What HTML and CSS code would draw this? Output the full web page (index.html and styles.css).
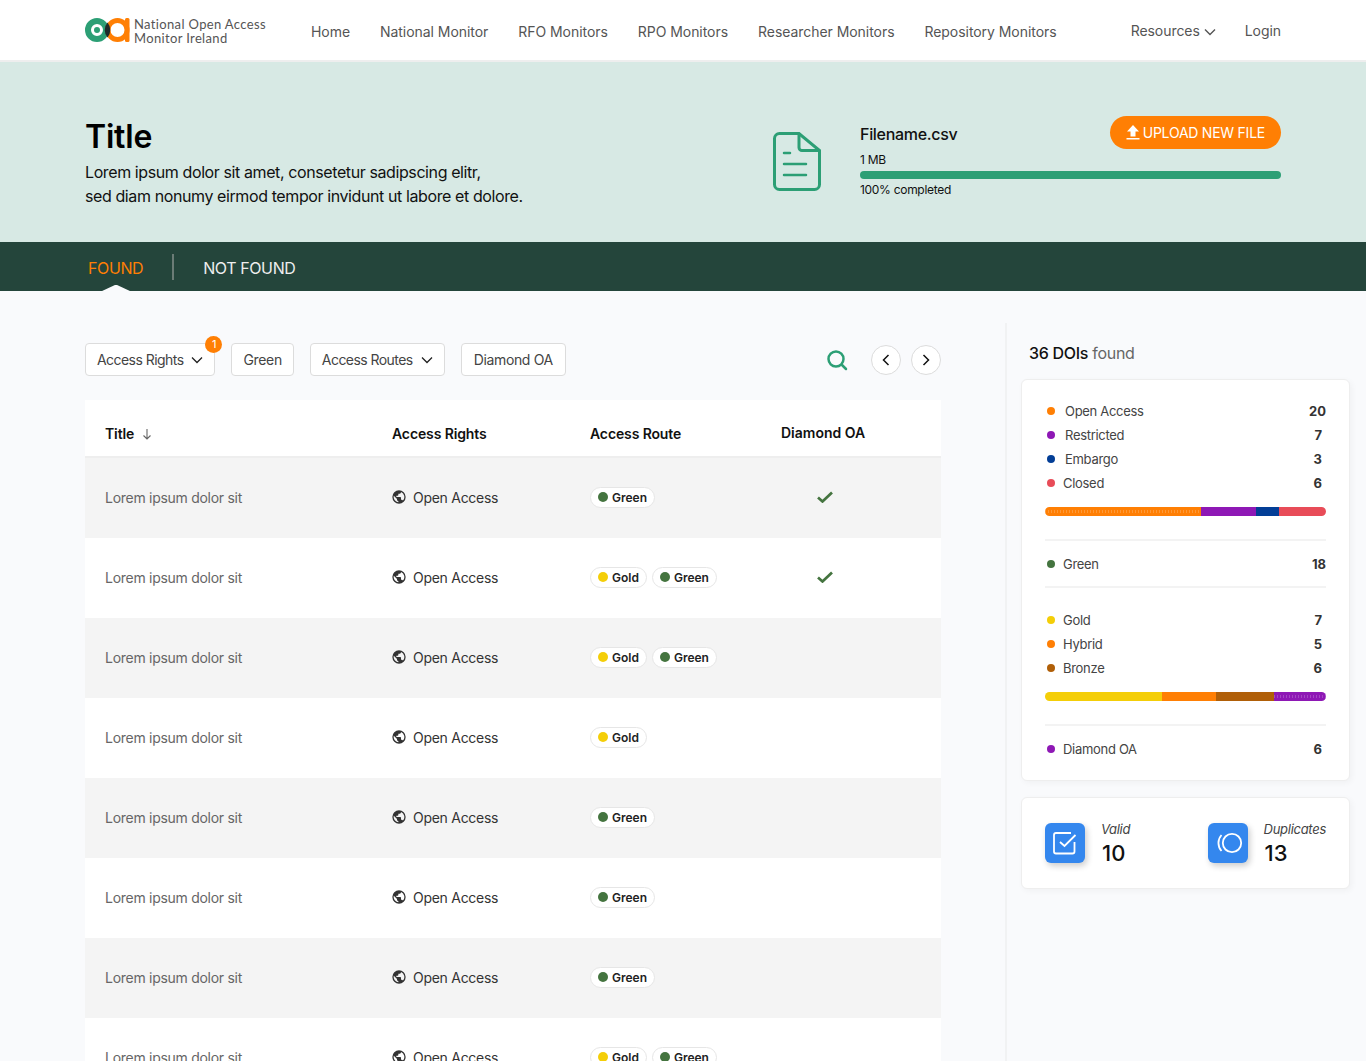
FILE: index.html
```html
<!DOCTYPE html>
<html lang="en">
<head>
  <meta charset="UTF-8" />
  <meta name="viewport" content="width=device-width, initial-scale=1.0" />
  <title>National Open Access Monitor Ireland</title>
  <link rel="stylesheet" href="styles.css">
</head>
<body>
  <header class="navbar">
    <a class="logo" href="#">
      <svg width="45" height="26" viewBox="0 0 45 26">
        <circle cx="12" cy="13" r="9" fill="none" stroke="#2c9f75" stroke-width="6"/>
        <circle cx="32.500" cy="13" r="9.500" fill="none" stroke="#ff7f04" stroke-width="5"/>
        <rect x="40" y="1" width="4.500" height="24" rx="1.500" fill="#ff7f04"/>
        <path d="M22.500 5.500a11.500 11.500 0 0 1 0 15a11.500 11.500 0 0 1 0-15z" fill="#1d2b2a"/>
        <circle cx="12" cy="13" r="3" fill="#2c9f75"/>
      </svg>
      <span class="logo-text">National Open Access<br>Monitor Ireland</span>
    </a>
    <nav class="nav-main">
      <a href="#">Home</a>
      <a href="#">National Monitor</a>
      <a href="#">RFO Monitors</a>
      <a href="#">RPO Monitors</a>
      <a href="#">Researcher Monitors</a>
      <a href="#">Repository Monitors</a>
    </nav>
    <nav class="nav-side">
      <a href="#" class="nav-drop">Resources
        <svg width="12" height="8" viewBox="0 0 12 8"><path d="M1 1.500l5 5 5-5" fill="none" stroke="#555" stroke-width="1.400"/></svg>
      </a>
      <a href="#">Login</a>
    </nav>
  </header>

  <section class="hero">
    <div class="hero-text">
      <h1>Title</h1>
      <p>Lorem ipsum dolor sit amet, consetetur sadipscing elitr,<br>sed diam nonumy eirmod tempor invidunt ut labore et dolore.</p>
    </div>
    <svg class="file-icon" width="48" height="59" viewBox="0 0 48 59">
      <path d="M7 1.500h19l20.500 17v34a5 5 0 0 1-5 5h-35a5 5 0 0 1-5-5v-46a5 5 0 0 1 5-5z" fill="none" stroke="#2c9f75" stroke-width="3"/>
      <path d="M26 1.500v14a3 3 0 0 0 3 3h17.500" fill="none" stroke="#2c9f75" stroke-width="3"/>
      <path d="M11 21h6M11 32h22M11 43h22" fill="none" stroke="#2c9f75" stroke-width="2.500" stroke-linecap="round"/>
    </svg>
    <div class="upload">
      <div class="upload-top">
        <div class="file-name">Filename.csv</div>
        <button class="upload-btn">
          <svg width="14" height="15" viewBox="0 0 14 15"><path d="M7 0l6 6.500h-3.500v5h-5v-5h-3.500z M0.500 13h13v1.500h-13z" fill="#fff"/></svg>
          UPLOAD NEW FILE
        </button>
      </div>
      <div class="file-size">1 MB</div>
      <div class="progress"></div>
      <div class="file-done">100% completed</div>
    </div>
  </section>

  <div class="tabs">
    <a href="#" class="tab tab-active">FOUND</a>
    <span class="tab-sep"></span>
    <a href="#" class="tab">NOT FOUND</a>
  </div>

  <main class="content">
    <div class="results">
      <div class="filters">
        <button class="filter filter-drop">Access Rights
          <svg width="12" height="8" viewBox="0 0 12 8"><path d="M1 1.500l5 5 5-5" fill="none" stroke="#222" stroke-width="1.300"/></svg>
          <span class="badge">1</span>
        </button>
        <button class="filter">Green</button>
        <button class="filter filter-drop">Access Routes
          <svg width="12" height="8" viewBox="0 0 12 8"><path d="M1 1.500l5 5 5-5" fill="none" stroke="#222" stroke-width="1.300"/></svg>
        </button>
        <button class="filter filter-wide">Diamond OA</button>
        <div class="filter-tools">
          <svg class="search" width="22" height="22" viewBox="0 0 22 22"><circle cx="10" cy="10" r="7.500" fill="none" stroke="#2c9f75" stroke-width="2.500"/><path d="M16 16l4 4" stroke="#2c9f75" stroke-width="2.500" stroke-linecap="round"/></svg>
          <button class="round-btn"><svg width="8" height="12" viewBox="0 0 8 12"><path d="M6.500 1l-5 5 5 5" fill="none" stroke="#111" stroke-width="1.500"/></svg></button>
          <button class="round-btn"><svg width="8" height="12" viewBox="0 0 8 12"><path d="M1.500 1l5 5-5 5" fill="none" stroke="#111" stroke-width="1.500"/></svg></button>
        </div>
      </div>

      <div class="table">
        <div class="row head">
          <div>Title <svg class="sort" width="10" height="12" viewBox="0 0 10 12"><path d="M5 1v10M1.500 7.500L5 11l3.500-3.500" fill="none" stroke="#666" stroke-width="1.100"/></svg></div>
          <div>Access Rights</div>
          <div>Access Route</div>
          <div class="head-oa">Diamond OA</div>
        </div>
        <div class="row">
          <div class="cell-title">Lorem ipsum dolor sit</div>
          <div class="cell-access"><svg class="globe" viewBox="0 0 24 24"><use href="#globe"/></svg>Open Access</div>
          <div class="cell-route"><span class="pill"><i class="dot green"></i>Green</span></div>
          <div class="cell-oa"><svg class="check" viewBox="0 0 16 12"><use href="#check"/></svg></div>
        </div>
        <div class="row">
          <div class="cell-title">Lorem ipsum dolor sit</div>
          <div class="cell-access"><svg class="globe" viewBox="0 0 24 24"><use href="#globe"/></svg>Open Access</div>
          <div class="cell-route"><span class="pill"><i class="dot gold"></i>Gold</span><span class="pill"><i class="dot green"></i>Green</span></div>
          <div class="cell-oa"><svg class="check" viewBox="0 0 16 12"><use href="#check"/></svg></div>
        </div>
        <div class="row">
          <div class="cell-title">Lorem ipsum dolor sit</div>
          <div class="cell-access"><svg class="globe" viewBox="0 0 24 24"><use href="#globe"/></svg>Open Access</div>
          <div class="cell-route"><span class="pill"><i class="dot gold"></i>Gold</span><span class="pill"><i class="dot green"></i>Green</span></div>
          <div class="cell-oa"></div>
        </div>
        <div class="row">
          <div class="cell-title">Lorem ipsum dolor sit</div>
          <div class="cell-access"><svg class="globe" viewBox="0 0 24 24"><use href="#globe"/></svg>Open Access</div>
          <div class="cell-route"><span class="pill"><i class="dot gold"></i>Gold</span></div>
          <div class="cell-oa"></div>
        </div>
        <div class="row">
          <div class="cell-title">Lorem ipsum dolor sit</div>
          <div class="cell-access"><svg class="globe" viewBox="0 0 24 24"><use href="#globe"/></svg>Open Access</div>
          <div class="cell-route"><span class="pill"><i class="dot green"></i>Green</span></div>
          <div class="cell-oa"></div>
        </div>
        <div class="row">
          <div class="cell-title">Lorem ipsum dolor sit</div>
          <div class="cell-access"><svg class="globe" viewBox="0 0 24 24"><use href="#globe"/></svg>Open Access</div>
          <div class="cell-route"><span class="pill"><i class="dot green"></i>Green</span></div>
          <div class="cell-oa"></div>
        </div>
        <div class="row">
          <div class="cell-title">Lorem ipsum dolor sit</div>
          <div class="cell-access"><svg class="globe" viewBox="0 0 24 24"><use href="#globe"/></svg>Open Access</div>
          <div class="cell-route"><span class="pill"><i class="dot green"></i>Green</span></div>
          <div class="cell-oa"></div>
        </div>
        <div class="row">
          <div class="cell-title">Lorem ipsum dolor sit</div>
          <div class="cell-access"><svg class="globe" viewBox="0 0 24 24"><use href="#globe"/></svg>Open Access</div>
          <div class="cell-route"><span class="pill"><i class="dot gold"></i>Gold</span><span class="pill"><i class="dot green"></i>Green</span></div>
          <div class="cell-oa"></div>
        </div>
      </div>
    </div>

    <aside class="sidebar">
      <h2 class="found"><b>36 DOIs</b> found</h2>
      <div class="card stats">
        <div class="stat"><i class="dot orange"></i><span class="label ind">Open Access</span><b class="num">20</b></div>
        <div class="stat"><i class="dot purple"></i><span class="label ind">Restricted</span><b class="num sm">7</b></div>
        <div class="stat"><i class="dot blue"></i><span class="label ind">Embargo</span><b class="num sm">3</b></div>
        <div class="stat"><i class="dot red"></i><span class="label">Closed</span><b class="num sm">6</b></div>
        <div class="bar">
          <span class="orange dotted" style="width:55.6%"></span><span class="purple" style="width:19.4%"></span><span class="blue" style="width:8.3%"></span><span class="red" style="width:16.7%"></span>
        </div>
        <hr class="sep sep-a">
        <div class="stat"><i class="dot green"></i><span class="label">Green</span><b class="num">18</b></div>
        <hr class="sep sep-b">
        <div class="stat"><i class="dot gold"></i><span class="label">Gold</span><b class="num sm">7</b></div>
        <div class="stat"><i class="dot orange"></i><span class="label">Hybrid</span><b class="num sm">5</b></div>
        <div class="stat"><i class="dot bronze"></i><span class="label">Bronze</span><b class="num sm">6</b></div>
        <div class="bar">
          <span class="gold" style="width:41.7%"></span><span class="orange" style="width:19.2%"></span><span class="bronze" style="width:20.5%"></span><span class="purple dotted" style="width:18.6%"></span>
        </div>
        <hr class="sep sep-c">
        <div class="stat"><i class="dot purple"></i><span class="label">Diamond OA</span><b class="num sm">6</b></div>
      </div>
      <div class="card totals">
        <div class="total">
          <span class="total-icon"><svg width="40" height="40" viewBox="0 0 40 40"><path d="M29.500 19v9.500a2 2 0 0 1-2 2H11a2 2 0 0 1-2-2V12a2 2 0 0 1 2-2h15" fill="none" stroke="#fff" stroke-width="1.800"/><path d="M15 19l4.500 4 11-11" fill="none" stroke="#fff" stroke-width="1.800"/></svg></span>
          <div class="total-text"><em>Valid</em><strong>10</strong></div>
        </div>
        <div class="total">
          <span class="total-icon"><svg width="40" height="40" viewBox="0 0 40 40"><circle cx="24" cy="20" r="9.200" fill="none" stroke="#fff" stroke-width="1.800"/><path d="M13.500 12a12 12 0 0 0 0 16" fill="none" stroke="#fff" stroke-width="1.800"/></svg></span>
          <div class="total-text"><em>Duplicates</em><strong>13</strong></div>
        </div>
      </div>
    </aside>
  </main>

  <svg class="defs" width="0" height="0">
    <defs>
      <path id="globe" fill="#333" d="M12 2a10 10 0 1 0 0 20 10 10 0 0 0 0-20zm-1 17.900A8 8 0 0 1 4.200 10.200L9 15v1a2 2 0 0 0 2 2zm6.900-2.500A2 2 0 0 0 16 16h-1v-3a1 1 0 0 0-1-1H8v-2h2a1 1 0 0 0 1-1V7h2a2 2 0 0 0 2-2v-.400a8 8 0 0 1 2.900 12.800z"/>
      <path id="check" fill="none" stroke="#44743f" stroke-width="2.700" d="M1 6.500l4.500 4L15 1.500"/>
    </defs>
  </svg>
</body>
</html>
```
FILE: styles.css
```css
* {
  box-sizing: border-box;
}

html, body {
  height: 1061px;
  overflow: hidden;
}

body {
  margin: 0;
  font-family: Inter, "Liberation Sans", sans-serif;
  background-color: #f9fafc;
  color: #222;
}

a {
  color: inherit;
  text-decoration: none;
}

button {
  font-family: inherit;
  cursor: pointer;
}

.defs {
  position: absolute;
}

/* top nav */
.navbar {
  display: flex;
  align-items: center;
  height: 62px;
  padding: 0 85px;
  background-color: #fff;
  border-bottom: 2px solid #eeeeee;
  color: #555;
  font-size: 14px;
  letter-spacing: -0.05px;
}

.logo {
  display: flex;
  align-items: center;
  gap: 4px;
  width: 226px;
}

.logo-text {
  margin-top: 2px;
  font-family: Lato, sans-serif;
  font-size: 13px;
  line-height: 14px;
  letter-spacing: 0.35px;
  color: #555;
}

.nav-main {
  display: flex;
  gap: 30px;
  flex: 1;
  padding-top: 2px;
}

.nav-side {
  display: flex;
  align-items: center;
  gap: 29px;
}

/* hero */
.hero {
  display: flex;
  align-items: flex-start;
  height: 180px;
  padding: 54px 85px 0;
  background-color: #d7e9e4;
  color: #111;
}

.hero-text {
  width: 688px;
}

.hero h1 {
  margin: 1px 0 4px;
  font-size: 32px;
  line-height: 39px;
  font-weight: 600;
  letter-spacing: -0.2px;
  color: #000;
}

.hero p {
  margin: 0;
  font-size: 16px;
  line-height: 24px;
  letter-spacing: -0.4px;
}

.file-icon {
  margin-top: 16px;
}

.upload {
  margin-left: 39px;
  width: 421px;
}

.upload-top {
  display: flex;
  justify-content: space-between;
  align-items: flex-start;
  height: 36px;
}

.file-name {
  margin-top: 8px;
  font-size: 16px;
  line-height: 20px;
  font-weight: 500;
  letter-spacing: -0.3px;
}

.upload-btn {
  display: flex;
  align-items: center;
  gap: 3px;
  height: 33px;
  padding: 0 16px;
  border: none;
  border-radius: 17px;
  background-color: #ff7f04;
  color: #fff;
  font-size: 14px;
  letter-spacing: -0.24px;
}

.file-size, .file-done {
  font-size: 12px;
  line-height: 16px;
  letter-spacing: -0.3px;
}

.progress {
  height: 8px;
  margin: 3px 0 3px;
  border-radius: 4px;
  background-color: #2c9f75;
}

/* tabs */
.tabs {
  display: flex;
  align-items: center;
  height: 49px;
  padding: 2px 0 0 88px;
  background-color: #24453b;
  color: #eee;
  font-size: 16px;
  letter-spacing: -0.4px;
}

.tab {
  position: relative;
  line-height: 54px;
}

.tab-active {
  color: #ff7f04;
}

.tab-active::after {
  content: "";
  position: absolute;
  left: 13px;
  bottom: 3px;
  width: 30px;
  height: 7px;
  background-color: #f9fafc;
  clip-path: polygon(0 100%, 50% 0, 100% 100%);
}

.tab-sep {
  width: 2px;
  height: 26px;
  margin: -2px 29px 0;
  background-color: #6b7c76;
}

/* main */
.content {
  display: flex;
  padding-left: 85px;
}

.results {
  width: 856px;
  padding-top: 52px;
}

.filters {
  display: flex;
  align-items: center;
  gap: 16px;
  height: 33px;
  margin-bottom: 24px;
}

.filter {
  position: relative;
  display: flex;
  align-items: center;
  gap: 8px;
  height: 33px;
  padding: 0 11px;
  border: 1px solid #dcdcdc;
  border-radius: 4px;
  background-color: #fff;
  color: #444;
  font-size: 14px;
  letter-spacing: -0.35px;
}

.filter-drop {
  letter-spacing: -0.55px;
}

.filter-wide {
  padding: 0 12px;
}

.badge {
  position: absolute;
  top: -8px;
  right: -8px;
  width: 17px;
  height: 17px;
  border-radius: 50%;
  background-color: #ff7f04;
  color: #fff;
  font-size: 11px;
  line-height: 17px;
  text-align: center;
}

.filter-tools {
  display: flex;
  align-items: center;
  gap: 10px;
  margin-left: auto;
}

.search {
  margin-right: 13px;
}

.round-btn {
  display: flex;
  align-items: center;
  justify-content: center;
  width: 30px;
  height: 30px;
  padding: 0;
  border: 1px solid #dcdcdc;
  border-radius: 50%;
  background-color: #fff;
}

.table {
  background-color: #fff;
}

.row {
  display: grid;
  grid-template-columns: 287px 198px 191px 1fr;
  align-items: center;
  height: 80px;
  padding: 0 20px 2px;
  font-size: 14px;
  letter-spacing: -0.28px;
}

.row:nth-child(even) {
  background-color: #f4f4f4;
}

.row.head {
  height: 58px;
  padding-top: 12px;
  border-bottom: 2px solid #eeeeee;
  color: #111;
  font-weight: 600;
  letter-spacing: -0.12px;
}

.sort {
  margin-left: 4px;
  vertical-align: -1px;
}

.head-oa {
  margin-top: -2px;
  letter-spacing: 0;
}

.cell-title {
  color: #666;
}

.cell-access {
  display: flex;
  align-items: center;
  gap: 6px;
  color: #333;
}

.globe {
  width: 16px;
  height: 16px;
  margin-left: -1px;
}

.cell-route {
  display: flex;
  gap: 5px;
}

.pill {
  display: inline-flex;
  align-items: center;
  gap: 4px;
  height: 21px;
  padding: 0 7px;
  border: 1px solid #e6e6e6;
  border-radius: 11px;
  background-color: #fff;
  color: #222;
  font-size: 12px;
  font-weight: 600;
  letter-spacing: 0;
}

.dot {
  display: inline-block;
  flex: none;
  width: 10px;
  height: 10px;
  border-radius: 50%;
}

.orange { background-color: #ff7f04; }
.purple { background-color: #8e18b5; }
.blue { background-color: #033e96; }
.red { background-color: #e84c58; }
.green { background-color: #44743f; }
.gold { background-color: #f4ce08; }
.bronze { background-color: #b05f08; }

.cell-oa {
  padding-left: 36px;
}

.check {
  display: block;
  width: 16px;
  height: 12px;
}

/* sidebar */
.sidebar {
  width: 361px;
  height: 770px;
  margin-left: 64px;
  margin-top: 32px;
  padding-left: 14px;
  border-left: 2px solid #f1f2f3;
}

.found {
  margin: 19px 0 15px 8px;
  font-size: 16px;
  line-height: 22px;
  font-weight: 400;
  letter-spacing: -0.3px;
  color: #666;
}

.found b {
  font-weight: 500;
  color: #111;
}

.card {
  width: 329px;
  border: 1px solid #eeeeee;
  border-radius: 6px;
  background-color: #fff;
  box-shadow: 2px 2px 6px rgba(0, 0, 0, 0.04);
}

.stats {
  padding: 19px 23px 19px;
  height: 402px;
}

.stat {
  display: flex;
  align-items: center;
  height: 24px;
  font-size: 13px;
  letter-spacing: -0.3px;
  color: #444;
}

.stat .dot {
  width: 8px;
  height: 8px;
  margin: 0 8px 0 2px;
}

.label.ind {
  margin-left: 2px;
}

.num {
  margin-left: auto;
  font-weight: 700;
  letter-spacing: 0;
  color: #333;
}

.num.sm {
  margin-right: 4px;
}

.bar {
  display: flex;
  height: 9px;
  margin-top: 12px;
  border-radius: 5px;
  overflow: hidden;
}

/* faint dots along the middle of a bar segment */
.dotted {
  background-image: repeating-linear-gradient(90deg, rgba(255, 255, 255, 0.2) 0 1px, transparent 1px 3px);
  background-size: 100% 3px;
  background-position: 0 center;
  background-repeat: no-repeat;
}

.sep {
  height: 2px;
  margin: 0;
  border: none;
  background-color: #f3f3f3;
}

.sep-a {
  margin: 23px 0 11px;
}

.sep-b {
  margin: 10px 0 20px;
}

.sep-c {
  margin: 23px 0 11px;
}

.totals {
  display: flex;
  justify-content: space-between;
  height: 92px;
  margin-top: 16px;
  padding: 25px 23px;
}

.total {
  display: flex;
  gap: 16px;
}

.total-icon {
  display: flex;
  align-items: center;
  justify-content: center;
  width: 40px;
  height: 40px;
  border-radius: 6px;
  background-color: #3487ee;
  box-shadow: 2px 3px 6px rgba(0, 0, 0, 0.2);
}

.total-text {
  margin-top: -2px;
}

.total em {
  display: block;
  font-size: 13px;
  line-height: 16px;
  letter-spacing: -0.28px;
  color: #444;
}

.total strong {
  display: block;
  margin-top: 3px;
  padding-left: 1px;
  font-size: 22px;
  line-height: 26px;
  font-weight: 500;
  color: #111;
}
```
